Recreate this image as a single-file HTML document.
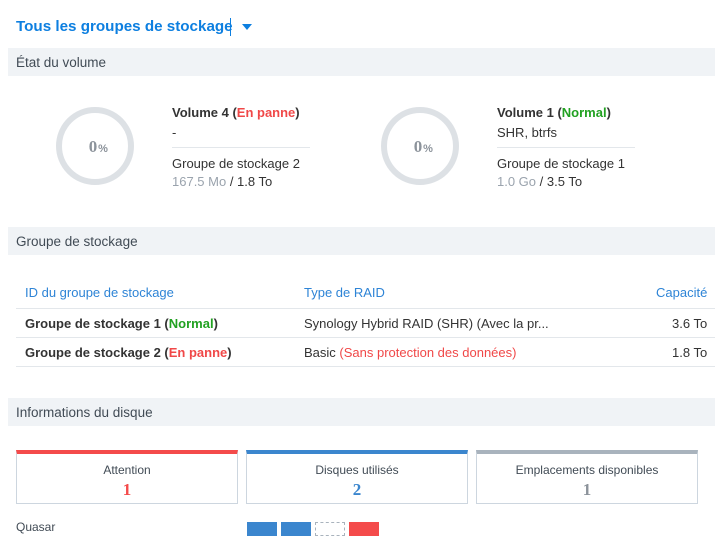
<!DOCTYPE html>
<html><head><meta charset="utf-8"><style>
*{margin:0;padding:0;box-sizing:border-box}
body{width:715px;height:545px;background:#fff;font-family:"Liberation Sans",sans-serif;color:#333;font-size:13px;position:relative;overflow:hidden}
.a{position:absolute;white-space:nowrap}
.band{position:absolute;left:8px;width:707px;height:28px;background:#f0f3f6;font-size:13.5px;color:#414b55;padding:7px 0 0 8px}
.b{font-weight:bold}
.red{color:#f04848}.grn{color:#21a121}
.blue{color:#2e84d6}
.hl{position:absolute;height:1px;background:#e3e7eb}
.card{position:absolute;top:450px;width:222px;height:54px;border:1px solid #cdd6df;border-top:4px solid;text-align:center;font-size:12px;color:#414b55}
.card .n{font-family:"Liberation Serif",serif;font-weight:bold;font-size:17px;margin-top:3px}
.sq{position:absolute;top:522px;width:30px;height:14px;background:#3b86ce}
</style></head><body>
<div class="a b" style="left:16px;top:18px;font-size:15.2px;color:#0d7fe0">Tous les groupes de stockage</div>
<div class="a" style="left:230px;top:18px;width:1px;height:18px;background:#0d7fe0"></div>
<div class="a" style="left:242px;top:24px;width:0;height:0;border-left:5px solid transparent;border-right:5px solid transparent;border-top:6px solid #0d7fe0"></div>

<div class="band" style="top:48px">État du volume</div>
<svg class="a" style="left:55px;top:100px" width="80" height="92"><circle cx="40" cy="46" r="36" fill="none" stroke="#dde1e5" stroke-width="6"/><text x="38" y="52" text-anchor="middle" font-family="Liberation Serif" font-weight="bold" font-size="17" fill="#8c939b">0</text><text x="48" y="52" text-anchor="middle" font-family="Liberation Sans" font-weight="bold" font-size="11" fill="#8c939b">%</text></svg>
<svg class="a" style="left:380px;top:100px" width="80" height="92"><circle cx="40" cy="46" r="36" fill="none" stroke="#dde1e5" stroke-width="6"/><text x="38" y="52" text-anchor="middle" font-family="Liberation Serif" font-weight="bold" font-size="17" fill="#8c939b">0</text><text x="48" y="52" text-anchor="middle" font-family="Liberation Sans" font-weight="bold" font-size="11" fill="#8c939b">%</text></svg>

<div class="a b" style="left:172px;top:105px">Volume 4 (<span class="red">En panne</span>)</div>
<div class="a" style="left:172px;top:125px">-</div>
<div class="hl" style="left:172px;top:147px;width:138px"></div>
<div class="a" style="left:172px;top:156px">Groupe de stockage 2</div>
<div class="a" style="left:172px;top:174px"><span style="color:#9aa3ad">167.5 Mo</span> / 1.8 To</div>

<div class="a b" style="left:497px;top:105px">Volume 1 (<span class="grn">Normal</span>)</div>
<div class="a" style="left:497px;top:125px">SHR, btrfs</div>
<div class="hl" style="left:497px;top:147px;width:138px"></div>
<div class="a" style="left:497px;top:156px">Groupe de stockage 1</div>
<div class="a" style="left:497px;top:174px"><span style="color:#9aa3ad">1.0 Go</span> / 3.5 To</div>

<div class="band" style="top:227px">Groupe de stockage</div>
<div class="a blue" style="left:25px;top:285px">ID du groupe de stockage</div>
<div class="a blue" style="left:304px;top:285px">Type de RAID</div>
<div class="a blue" style="left:656px;top:285px">Capacité</div>
<div class="hl" style="left:16px;top:308px;width:699px"></div>
<div class="a b" style="left:25px;top:316px">Groupe de stockage 1 (<span class="grn">Normal</span>)</div>
<div class="a" style="left:304px;top:316px">Synology Hybrid RAID (SHR) (Avec la pr...</div>
<div class="a" style="left:672px;top:316px">3.6 To</div>
<div class="hl" style="left:16px;top:337px;width:699px"></div>
<div class="a b" style="left:25px;top:345px">Groupe de stockage 2 (<span class="red">En panne</span>)</div>
<div class="a" style="left:304px;top:345px">Basic <span class="red">(Sans protection des données)</span></div>
<div class="a" style="left:672px;top:345px">1.8 To</div>
<div class="hl" style="left:16px;top:366px;width:699px"></div>

<div class="band" style="top:398px">Informations du disque</div>
<div class="card" style="left:16px;border-top-color:#f44b4b"><div style="margin-top:9px">Attention</div><div class="n" style="color:#f44b4b">1</div></div>
<div class="card" style="left:246px;border-top-color:#3b86ce"><div style="margin-top:9px">Disques utilisés</div><div class="n" style="color:#3b86ce">2</div></div>
<div class="card" style="left:476px;border-top-color:#a9b3bd"><div style="margin-top:9px">Emplacements disponibles</div><div class="n" style="color:#8c939b">1</div></div>

<div class="a" style="left:16px;top:520px;font-size:12px;color:#414b55">Quasar</div>
<div class="sq" style="left:247px"></div>
<div class="sq" style="left:281px"></div>
<div class="sq" style="left:315px;background:#fff;border:1px dashed #a9b3bd"></div>
<div class="sq" style="left:349px;background:#f44b4b"></div>
</body></html>
